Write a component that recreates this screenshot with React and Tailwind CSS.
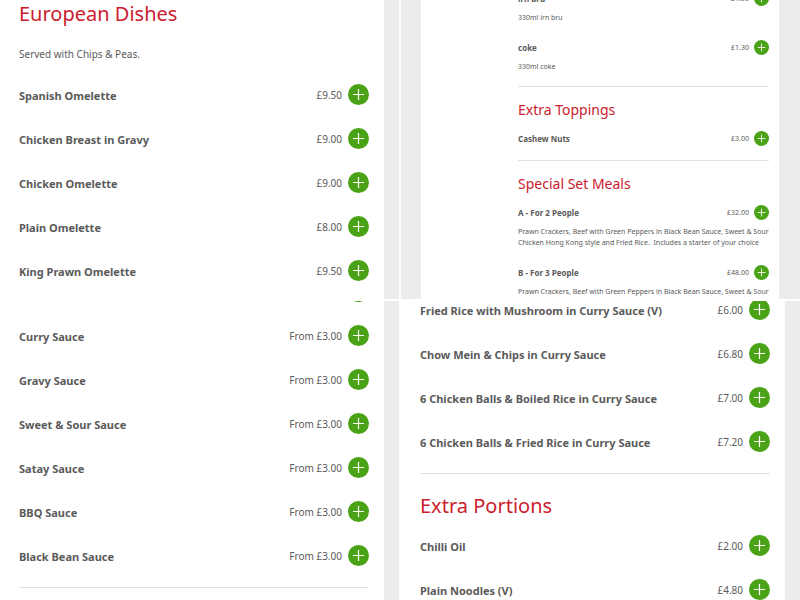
import clsx from 'clsx';

const europeanDishes = [
  { name: 'Spanish Omelette', price: '£9.50' },
  { name: 'Chicken Breast in Gravy', price: '£9.00' },
  { name: 'Chicken Omelette', price: '£9.00' },
  { name: 'Plain Omelette', price: '£8.00' },
  { name: 'King Prawn Omelette', price: '£9.50' },
];

const drinks = [
  { name: 'irn bru', price: '£1.30', description: '330ml irn bru' },
  { name: 'coke', price: '£1.30', description: '330ml coke' },
];

const toppings = [{ name: 'Cashew Nuts', price: '£3.00' }];

const setMeals = [
  {
    name: 'A - For 2 People',
    price: '£32.00',
    description:
      'Prawn Crackers, Beef with Green Peppers in Black Bean Sauce, Sweet & Sour\nChicken Hong Kong style and Fried Rice.  Includes a starter of your choice',
  },
  {
    name: 'B - For 3 People',
    price: '£48.00',
    description: 'Prawn Crackers, Beef with Green Peppers in Black Bean Sauce, Sweet & Sour',
  },
];

const sauces = [
  { name: '', price: '' },
  { name: 'Curry Sauce', price: 'From £3.00' },
  { name: 'Gravy Sauce', price: 'From £3.00' },
  { name: 'Sweet & Sour Sauce', price: 'From £3.00' },
  { name: 'Satay Sauce', price: 'From £3.00' },
  { name: 'BBQ Sauce', price: 'From £3.00' },
  { name: 'Black Bean Sauce', price: 'From £3.00' },
];

const curryDishes = [
  { name: 'Fried Rice with Mushroom in Curry Sauce (V)', price: '£6.00' },
  { name: 'Chow Mein & Chips in Curry Sauce', price: '£6.80' },
  { name: '6 Chicken Balls & Boiled Rice in Curry Sauce', price: '£7.00' },
  { name: '6 Chicken Balls & Fried Rice in Curry Sauce', price: '£7.20' },
];

const portions = [
  { name: 'Chilli Oil', price: '£2.00' },
  { name: 'Plain Noodles (V)', price: '£4.80' },
];

const AddButton = ({ name, small }) => (
  <button
    type="button"
    aria-label={`Add ${name}`}
    className={clsx(
      'flex shrink-0 items-center justify-center rounded-full bg-[#4aa317] text-white',
      small ? 'size-[15px]' : 'size-[21px]'
    )}
  >
    <svg viewBox="0 0 21 21" className="size-full" fill="none" stroke="currentColor" strokeWidth="1.2">
      <path d="M10.5 5v11M5 10.5h11" />
    </svg>
  </button>
);

const MenuItems = ({ items }) => (
  <ul>
    {items.map((item, index) => (
      <li key={index} className="flex h-11 items-center justify-between">
        <h3 className="pt-1 text-[11px] font-bold whitespace-nowrap">{item.name}</h3>
        <div className="flex items-center gap-[6px]">
          <span className="pt-[2px] text-[10px] whitespace-nowrap">{item.price}</span>
          <AddButton name={item.name} />
        </div>
      </li>
    ))}
  </ul>
);

const SmallMenuItems = ({ items }) => (
  <ul>
    {items.map((item, index) => (
      <li key={index} className="pb-3">
        <div className="flex h-5 items-center justify-between">
          <h3 className="pt-[2px] text-[8px] font-bold">{item.name}</h3>
          <div className="flex items-center gap-[5px]">
            <span className="pt-[2px] text-[7px]">{item.price}</span>
            <AddButton name={item.name} small />
          </div>
        </div>
        {item.description && (
          <p className="mt-1 pb-[2px] text-[7px] leading-[11px] whitespace-pre">{item.description}</p>
        )}
      </li>
    ))}
  </ul>
);

const Heading = ({ children }) => <h2 className="text-[20px] leading-7 text-[#cb202d]">{children}</h2>;

const SmallHeading = ({ children }) => (
  <h2 className="mt-[13px] mb-2 text-[14px] leading-5 text-[#cb202d]">{children}</h2>
);

const App = () => (
  <main className="grid h-screen grid-cols-2 grid-rows-2 gap-[2px] overflow-hidden bg-white font-['Noto_Sans',sans-serif] text-[#5a5a5a]">
    <section className="overflow-hidden bg-[#ececec] pr-[15px]">
      <div className="h-full bg-white pr-[15px] pl-[19px]">
        <Heading>European Dishes</Heading>
        <p className="mt-4 mb-2 text-[10px] leading-5">Served with Chips &amp; Peas.</p>
        <MenuItems items={europeanDishes} />
      </div>
    </section>

    <section className="overflow-hidden bg-[#ececec] pr-[21px] pl-[20px]">
      <div className="flow-root h-full bg-white pr-[10px] pl-[97px]">
        <div className="-mt-3">
          <SmallMenuItems items={drinks} />
          <hr className="border-[#e2e2e2]" />
          <SmallHeading>Extra Toppings</SmallHeading>
          <SmallMenuItems items={toppings} />
          <hr className="border-[#e2e2e2]" />
          <SmallHeading>Special Set Meals</SmallHeading>
          <SmallMenuItems items={setMeals} />
        </div>
      </div>
    </section>

    <section className="overflow-hidden bg-[#ececec] pr-[15px]">
      <div className="flow-root h-full bg-white pr-[15px] pl-[19px]">
        <div className="-mt-8">
          <MenuItems items={sauces} />
          <hr className="mt-[10px] border-[#e2e2e2]" />
        </div>
      </div>
    </section>

    <section className="overflow-hidden bg-[#ececec] pr-[15px]">
      <div className="flow-root h-full bg-white pr-[15px] pl-[19px]">
        <div className="-mt-[14px]">
          <MenuItems items={curryDishes} />
          <hr className="mt-[10px] mb-[18px] border-[#e2e2e2]" />
          <Heading>Extra Portions</Heading>
          <div className="mt-[3px]">
            <MenuItems items={portions} />
          </div>
        </div>
      </div>
    </section>
  </main>
);

export default App;
